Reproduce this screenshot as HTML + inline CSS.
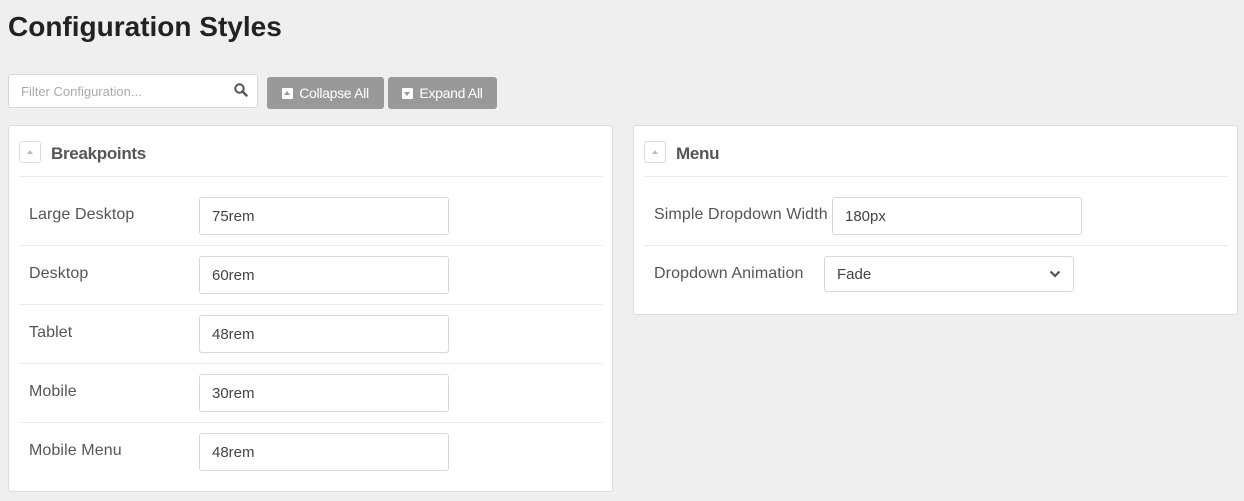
<!DOCTYPE html>
<html><head><style>
*{box-sizing:border-box;margin:0;padding:0}
body{width:1244px;height:501px;background:#efefef;font-family:"Liberation Sans",sans-serif;position:relative;overflow:hidden;color:#555}
.a{position:absolute}
h1{position:absolute;left:8px;top:11px;font-size:28px;font-weight:bold;color:#222;letter-spacing:0px}
.inp{position:absolute;background:#fff;border:1px solid #d8d8d8;border-radius:3px;font-size:15px;color:#444;padding-left:12px;display:flex;align-items:center}
.btn{position:absolute;background:#999;color:#fff;border-radius:3px;font-size:14px;display:flex;align-items:center;justify-content:center;letter-spacing:-0.3px}
.ic{display:inline-block;width:11px;height:11px;background:#fff;margin-right:6px;position:relative;border-radius:1px}
.ic.up:after{content:"";position:absolute;left:2px;top:3px;border:3.5px solid transparent;border-bottom:4px solid #999;border-top:0}
.ic.dn:after{content:"";position:absolute;left:2px;top:4px;border:3.5px solid transparent;border-top:4px solid #999;border-bottom:0}
.panel{position:absolute;background:#fff;border:1px solid #dcdcdc;border-radius:3px}
.tog{position:absolute;width:22px;height:22px;border:1px solid #ddd;border-radius:3px}
.tog:after{content:"";position:absolute;left:7px;top:8px;border:3.5px solid transparent;border-bottom:4px solid #bbb;border-top:0}
.pt{position:absolute;font-size:17px;font-weight:bold;color:#555;letter-spacing:-0.3px}
.line{position:absolute;height:1px;background:#ebebeb}
.lbl{position:absolute;font-size:16px;color:#555;letter-spacing:0.1px}
</style></head><body>
<h1>Configuration Styles</h1>
<div class="inp" style="left:8px;top:74px;width:250px;height:34px;color:#aaa;font-size:13px">Filter Configuration...
<svg class="a" style="left:225px;top:8px" width="14" height="14" viewBox="0 0 14 14"><circle cx="5.5" cy="5.5" r="4.2" fill="none" stroke="#555" stroke-width="2"/><path d="M8.5 8.5L12.5 12.5" stroke="#555" stroke-width="2.4" stroke-linecap="round"/></svg></div>
<div class="btn" style="left:267px;top:77px;width:117px;height:32px"><span class="ic up"></span>Collapse All</div>
<div class="btn" style="left:388px;top:77px;width:109px;height:32px"><span class="ic dn"></span>Expand All</div>

<div class="panel" style="left:8px;top:125px;width:605px;height:367px">
<div class="tog" style="left:10px;top:15px"></div>
<div class="pt" style="left:42px;top:18px">Breakpoints</div>
<div class="line" style="left:10px;top:50px;width:584px"></div>
<div class="lbl" style="left:20px;top:80px">Large Desktop</div><div class="inp" style="left:190px;top:71px;width:250px;height:38px">75rem</div>
<div class="line" style="left:10px;top:119px;width:584px"></div>
<div class="lbl" style="left:20px;top:139px">Desktop</div><div class="inp" style="left:190px;top:130px;width:250px;height:38px">60rem</div>
<div class="line" style="left:10px;top:178px;width:584px"></div>
<div class="lbl" style="left:20px;top:198px">Tablet</div><div class="inp" style="left:190px;top:189px;width:250px;height:38px">48rem</div>
<div class="line" style="left:10px;top:237px;width:584px"></div>
<div class="lbl" style="left:20px;top:257px">Mobile</div><div class="inp" style="left:190px;top:248px;width:250px;height:38px">30rem</div>
<div class="line" style="left:10px;top:296px;width:584px"></div>
<div class="lbl" style="left:20px;top:316px">Mobile Menu</div><div class="inp" style="left:190px;top:307px;width:250px;height:38px">48rem</div>
</div>

<div class="panel" style="left:633px;top:125px;width:605px;height:190px">
<div class="tog" style="left:10px;top:15px"></div>
<div class="pt" style="left:42px;top:18px">Menu</div>
<div class="line" style="left:10px;top:50px;width:584px"></div>
<div class="lbl" style="left:20px;top:80px">Simple Dropdown Width</div><div class="inp" style="left:198px;top:71px;width:250px;height:38px">180px</div>
<div class="line" style="left:10px;top:119px;width:584px"></div>
<div class="lbl" style="left:20px;top:139px">Dropdown Animation</div><div class="inp" style="left:190px;top:130px;width:250px;height:36px">Fade
<svg class="a" style="left:224px;top:13px" width="12" height="8" viewBox="0 0 12 8"><path d="M1.5 1.5L6 6L10.5 1.5" fill="none" stroke="#555" stroke-width="2.2"/></svg></div>
</div>
</body></html>
